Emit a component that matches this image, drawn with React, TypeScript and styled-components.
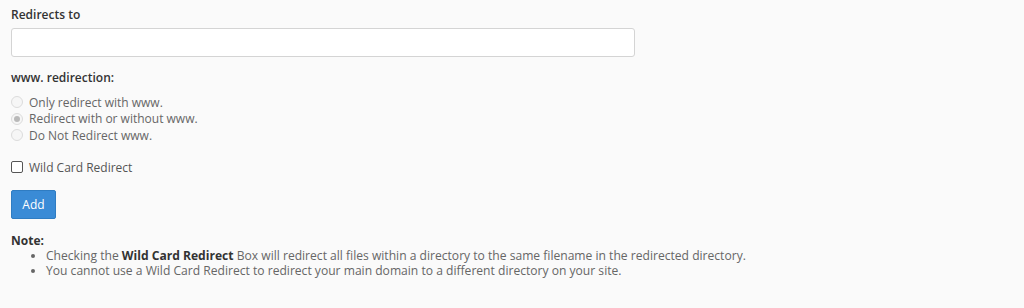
import React from 'react';
import styled, { createGlobalStyle } from 'styled-components';

const GlobalStyle = createGlobalStyle`
  html, body {
    margin: 0;
    padding: 0;
    background: #fafafa;
  }
  body {
    font-family: "Open Sans", "Liberation Sans", sans-serif;
    font-size: 12px;
    color: #333;
  }
`;

const Page = styled.div`
  padding: 7px 11px 0 11px;
`;

const Field = styled.div`
  margin-bottom: 13px;
`;

const Label = styled.label<{ gap?: number }>`
  display: block;
  font-weight: 600;
  font-size: 12px;
  line-height: 16px;
  color: #333;
  margin-bottom: ${p => p.gap ?? 5}px;
`;

const TextInput = styled.input`
  display: block;
  box-sizing: border-box;
  width: 624px;
  height: 29px;
  border: 1px solid #d4d4d4;
  border-radius: 3px;
  background: #fff;
  padding: 4px 8px;
  font: inherit;
`;

const Options = styled.div`
  display: flex;
  flex-direction: column;
  margin-bottom: 15px;
`;

const OptionRow = styled.label`
  display: flex;
  align-items: center;
  gap: 6px;
  height: 16.5px;
  color: #666;
  font-size: 12px;
`;

const Radio = styled.span<{ checked?: boolean }>`
  box-sizing: border-box;
  width: 12px;
  height: 12px;
  border-radius: 50%;
  border: 1px solid #dcdcdc;
  background: #f6f6f6;
  display: flex;
  align-items: center;
  justify-content: center;
  &::after {
    content: '';
    width: 6px;
    height: 6px;
    border-radius: 50%;
    background: ${p => (p.checked ? '#b9b9b9' : 'transparent')};
  }
`;

const CheckRow = styled.label`
  display: flex;
  align-items: center;
  gap: 6px;
  color: #555;
  font-size: 12px;
  margin-bottom: 14px;
`;

const Box = styled.span`
  box-sizing: border-box;
  width: 12px;
  height: 12px;
  border: 1px solid #555;
  border-radius: 2px;
  background: #fff;
`;

const Button = styled.button`
  display: block;
  width: 45px;
  height: 29px;
  border: 1px solid #2f7cc2;
  border-radius: 2px;
  background: #3a8bd6;
  color: #fff;
  font-family: inherit;
  font-size: 12px;
  padding: 0;
  margin-bottom: 15px;
`;

const NoteTitle = styled.div`
  font-weight: 700;
  color: #333;
  line-height: 14px;
`;

const NoteList = styled.ul`
  margin: 0;
  padding-left: 35px;
  color: #666;
  font-size: 12.1px;
  li {
    line-height: 15px;
  }
  strong {
    color: #333;
    font-weight: 700;
  }
`;

export default function App() {
  return (
    <>
      <GlobalStyle />
      <Page>
        <Field>
          <Label>Redirects to</Label>
          <TextInput type="text" />
        </Field>
        <Label gap={8}>www. redirection:</Label>
        <Options>
          <OptionRow><Radio />Only redirect with www.</OptionRow>
          <OptionRow><Radio checked />Redirect with or without www.</OptionRow>
          <OptionRow><Radio />Do Not Redirect www.</OptionRow>
        </Options>
        <CheckRow><Box />Wild Card Redirect</CheckRow>
        <Button>Add</Button>
        <NoteTitle>Note:</NoteTitle>
        <NoteList>
          <li>Checking the <strong>Wild Card Redirect</strong> Box will redirect all files within a directory to the same filename in the redirected directory.</li>
          <li>You cannot use a Wild Card Redirect to redirect your main domain to a different directory on your site.</li>
        </NoteList>
      </Page>
    </>
  );
}
